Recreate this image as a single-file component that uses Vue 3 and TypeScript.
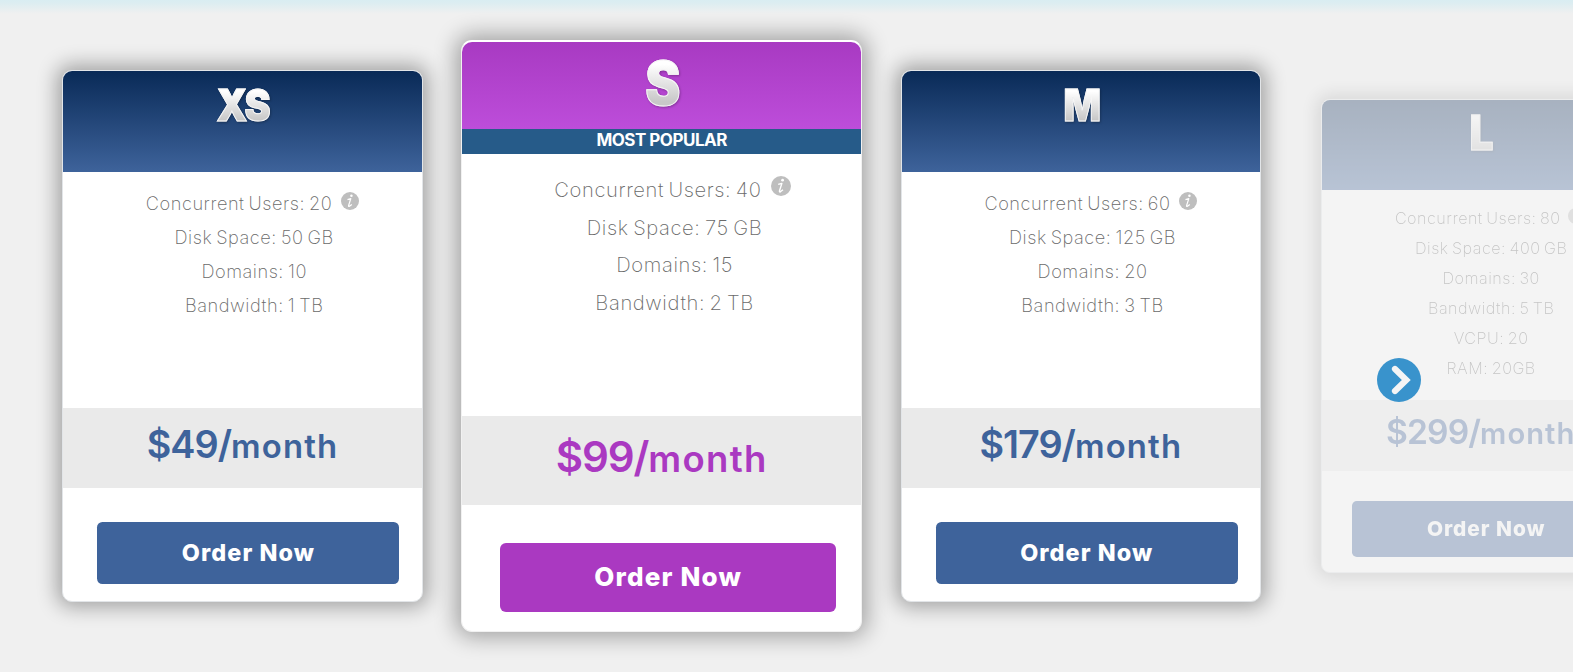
<script setup lang="ts">
interface Plan {
  name: string
  size: 'small' | 'medium' | 'large'
  popular?: boolean
  features: string[]
  price: string
}

const plans: Plan[] = [
  {
    name: 'XS',
    size: 'medium',
    features: ['Concurrent Users: 20', 'Disk Space: 50 GB', 'Domains: 10', 'Bandwidth: 1 TB'],
    price: '$49/',
  },
  {
    name: 'S',
    size: 'large',
    popular: true,
    features: ['Concurrent Users: 40', 'Disk Space: 75 GB', 'Domains: 15', 'Bandwidth: 2 TB'],
    price: '$99/',
  },
  {
    name: 'M',
    size: 'medium',
    features: ['Concurrent Users: 60', 'Disk Space: 125 GB', 'Domains: 20', 'Bandwidth: 3 TB'],
    price: '$179/',
  },
  {
    name: 'L',
    size: 'small',
    features: [
      'Concurrent Users: 80',
      'Disk Space: 400 GB',
      'Domains: 30',
      'Bandwidth: 5 TB',
      'VCPU: 20',
      'RAM: 20GB',
    ],
    price: '$299/',
  },
]
</script>

<template>
  <div class="pricing">
    <article v-for="plan in plans" :key="plan.name" class="card" :class="[plan.size, { popular: plan.popular }]">
      <header class="head">
        <h2 class="name">{{ plan.name }}</h2>
      </header>
      <div v-if="plan.popular" class="ribbon">MOST POPULAR</div>
      <ul class="features">
        <li v-for="(feature, i) in plan.features" :key="feature">
          <span>{{ feature }}</span>
          <svg v-if="i === 0" class="info" viewBox="0 0 20 20">
            <circle cx="10" cy="10" r="10" fill="#bebebe" />
            <circle cx="11.6" cy="4.2" r="1.4" fill="#fff" />
            <path d="M7.2 8.4 10.9 7.4 8.5 14.8Q8.2 16.4 9.4 15.8L12 13.8" fill="none" stroke="#fff" stroke-width="1.4" stroke-linejoin="round" />
          </svg>
        </li>
      </ul>
      <div class="price">
        <span class="amount">{{ plan.price }}</span><span class="period">month</span>
      </div>
      <button class="order" type="button">Order Now</button>
    </article>

    <button class="next" type="button" aria-label="Next">
      <svg viewBox="0 0 44 44">
        <path d="M18 11 29.3 22 18 33" fill="none" stroke="#f5f5f5" stroke-width="6.2" stroke-linecap="round" />
      </svg>
    </button>
  </div>
</template>

<style>
body {
  margin: 0;
  overflow: hidden;
}
</style>

<style scoped>
.pricing {
  position: relative;
  box-sizing: border-box;
  display: flex;
  align-items: center;
  height: 672px;
  padding-left: 62.3px;
  overflow: hidden;
  background: linear-gradient(#d9edf2 0, #dcedf1 3px, #f0f0f0 14px);
  font-family: Inter, 'Liberation Sans', sans-serif;
}

/* every card length is a multiple of --u, so the sizes stay in proportion */
.card {
  --u: 1px;
  --accent: #3e639b;
  box-sizing: border-box;
  flex: none;
  display: flex;
  flex-direction: column;
  width: calc(400.4 * var(--u));
  height: calc(592 * var(--u));
  margin-right: 38.8px;
  border: 1px solid #e2e5e8;
  border-radius: calc(11 * var(--u));
  background: #fff;
  box-shadow: 0 0 calc(22 * var(--u)) calc(5 * var(--u)) rgba(0, 0, 0, 0.33);
}

.card.medium {
  --u: 0.9px;
}

.card.small {
  --u: 0.8px;
  margin-left: 20.8px;
  opacity: 0.31;
}

.card.popular {
  --accent: #aa39c1;
  border-color: #f1f1f1;
  border-top: 2px solid #fff;
}

.head {
  box-sizing: border-box;
  height: calc(112.5 * var(--u));
  border-radius: calc(10 * var(--u)) calc(10 * var(--u)) 0 0;
  background: linear-gradient(#092a57, #3e639b);
  text-align: center;
}

.popular .head {
  height: 87px;
  background: linear-gradient(#a83ac2, #bd4dda);
}

.name {
  display: inline-block;
  margin: calc(13 * var(--u)) 0 0;
  padding: 0 4px;
  background: linear-gradient(#fff 20%, #c8c8c8 80%);
  background-clip: text;
  -webkit-background-clip: text;
  -webkit-text-stroke: 1px #f6f6f6;
  color: transparent;
  font-size: calc(49.5 * var(--u));
  font-weight: 900;
  line-height: calc(52 * var(--u));
  letter-spacing: calc(-3 * var(--u));
  transform: scaleX(0.88);
  filter: drop-shadow(1px 1px 1px rgba(0, 0, 0, 0.25));
}

.popular .name,
.small .name {
  margin-top: calc(10 * var(--u));
  font-size: calc(60 * var(--u));
  line-height: calc(62 * var(--u));
}

.ribbon {
  height: 25px;
  background: #265b89;
  color: #fff;
  font-size: 17px;
  font-weight: 700;
  line-height: 23px;
  letter-spacing: -0.5px;
  text-align: center;
}

.features {
  flex: 1;
  margin: 0;
  padding: calc(17 * var(--u)) 0 0 calc(26 * var(--u));
  list-style: none;
  color: #6a6a6a;
  font-size: calc(20.2 * var(--u));
  font-weight: 200;
  line-height: calc(37.6 * var(--u));
  letter-spacing: calc(0.6 * var(--u));
  word-spacing: calc(-1.8 * var(--u));
  text-align: center;
}

.small .features {
  padding-top: calc(16 * var(--u));
}

.features li {
  display: flex;
  justify-content: center;
  height: calc(37.6 * var(--u));
}

.info {
  width: calc(20 * var(--u));
  height: calc(20 * var(--u));
  margin: calc(5 * var(--u)) calc(4 * var(--u)) 0 calc(9.5 * var(--u));
}

.small .info {
  margin-top: calc(6 * var(--u));
}

.price {
  height: calc(89 * var(--u));
  background: #eaeaea;
  color: var(--accent);
  font-weight: 600;
  line-height: calc(81 * var(--u));
  text-align: center;
  white-space: nowrap;
}

.amount {
  font-size: calc(42 * var(--u));
  letter-spacing: calc(-1.1 * var(--u));
}

.period {
  font-size: calc(36.5 * var(--u));
  letter-spacing: calc(1.3 * var(--u));
}

.order {
  flex: none;
  width: calc(335.5 * var(--u));
  height: calc(69 * var(--u));
  margin: calc(38 * var(--u)) 0 calc(19 * var(--u)) calc(38 * var(--u));
  padding: 0 0 calc(2 * var(--u));
  border: 0;
  border-radius: calc(6 * var(--u));
  background: var(--accent);
  color: #fff;
  font-family: inherit;
  font-size: calc(26 * var(--u));
  font-weight: 800;
  letter-spacing: calc(1.2 * var(--u));
}

.next {
  position: absolute;
  top: 358px;
  left: 1376.7px;
  width: 44px;
  height: 44px;
  padding: 0;
  border: 0;
  border-radius: 50%;
  background: #3993cc;
}

.next svg {
  display: block;
}
</style>
